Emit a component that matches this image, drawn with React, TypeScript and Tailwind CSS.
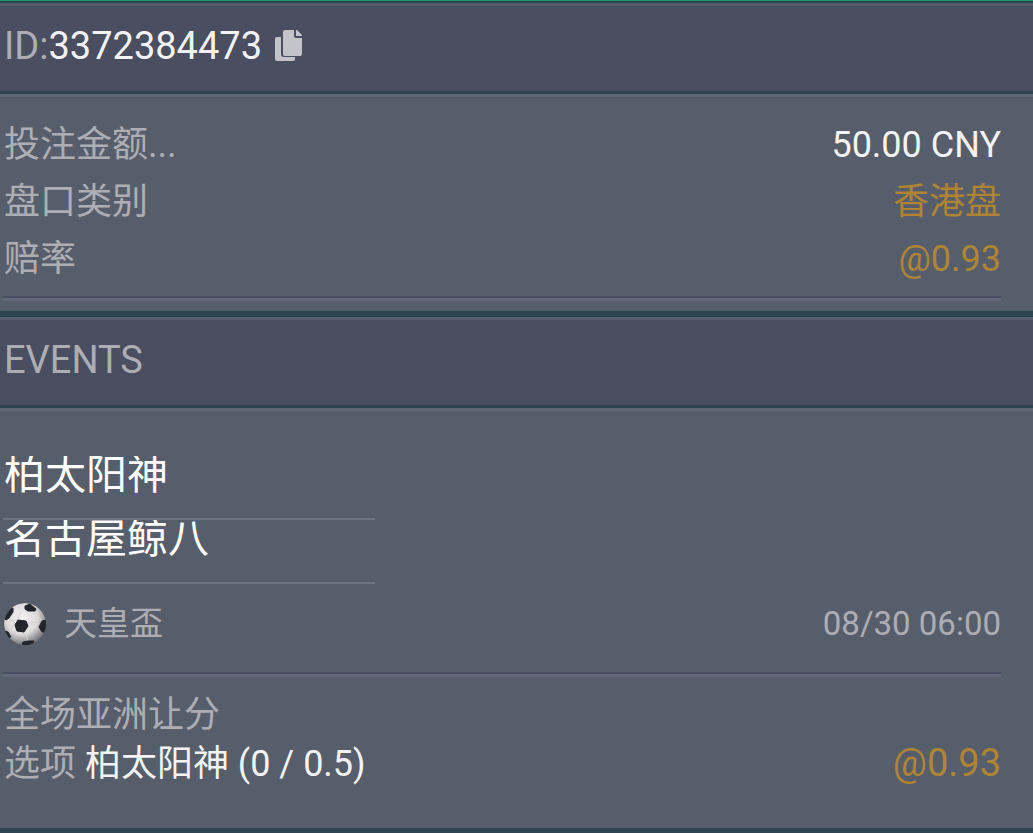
import type { ReactNode } from "react";

function SectionHeader({ children }: { children: ReactNode }) {
  return (
    <header className="flex h-[91px] items-center border-t-3 border-b-3 border-t-[#545b6b] border-b-[#2f4351] bg-[#494f61] px-1 pb-1.5 text-[38px] leading-[46px] text-[#acaeb3]">
      {children}
    </header>
  );
}

function Divider() {
  return <hr className="h-[5px] border-t-2 border-[#494f61] bg-[#626776]" />;
}

function DetailRow({ label, children }: { label: string; children: ReactNode }) {
  return (
    <div className="flex h-[57px] items-center justify-between pl-px">
      <dt>{label}</dt>
      <dd>{children}</dd>
    </div>
  );
}

function Team({ name }: { name: string }) {
  return (
    <div className="h-16 w-[372px] overflow-hidden border-b-2 border-[#6b7280] px-px">
      <h3 className="-mt-2 text-[41px] leading-[54px] text-white">{name}</h3>
    </div>
  );
}

function CopyIcon() {
  return (
    <svg viewBox="0 0 28 32" className="h-8 w-7" fill="#c3c4ca" aria-hidden="true">
      <path d="M2 7h4v17q0 3 3 3h11v2q0 2-2 2H2q-2 0-2-2V9q0-2 2-2z" />
      <path d="M10 0h9v6q0 2 2 2h6v16q0 2-2 2H10q-2 0-2-2V2q0-2 2-2z" />
      <path d="M21 0h1l5 5v1h-6z" />
    </svg>
  );
}

function SoccerBall() {
  return (
    <svg viewBox="0 0 42 42" className="h-[42px] w-[42px]" aria-hidden="true">
      <defs>
        <radialGradient id="ball-shade" cx="42%" cy="36%" r="64%">
          <stop offset="0" stopColor="#f1efef" />
          <stop offset="0.6" stopColor="#dbd9d9" />
          <stop offset="1" stopColor="#77777b" />
        </radialGradient>
        <clipPath id="ball-edge">
          <circle cx="21" cy="21" r="21" />
        </clipPath>
      </defs>
      <g clipPath="url(#ball-edge)">
        <circle cx="21" cy="21" r="21" fill="url(#ball-shade)" />
        <path
          d="M13 17 17 9M24 20 35 19M21 30 24 38M12 29 7 31M11 20 5 15M31 8 37 17"
          fill="none"
          stroke="#d3d1d2"
        />
        <g fill="#22252b" stroke="#22252b" strokeLinejoin="round">
          <path d="M14 17 22 18 24 23 20 29 13 28 11 22z" />
          <path d="M21 3 26 1 32 6 31 8 24 8 21 6z" />
          <path d="M38 18 42 17V29L38 29 35 24z" />
          <path d="M0 15 4 7 9 5 9 9 5 15 2 17z" />
          <path d="M1 28 4 29 7 34 4 35z" />
          <path d="M19 39 24 38 30 38 28 42H18z" />
        </g>
      </g>
    </svg>
  );
}

export default function App() {
  return (
    <main
      lang="zh-CN"
      className="border-t border-[#1f9667] bg-[#575e6b] font-['Roboto','Noto_Sans_CJK_SC',sans-serif] text-[36px] leading-[48px] text-[#acaeb3]"
    >
      <section className="border-t-2 border-[#2f4351]">
        <SectionHeader>
          <span>ID:</span>
          <span className="text-[#f3f3f4]">3372384473</span>
          <button type="button" aria-label="复制" className="ml-[13px]">
            <CopyIcon />
          </button>
        </SectionHeader>
        <div className="border-t-3 border-[#626776] pr-8 pb-[10px] pl-[3px]">
          <dl className="pt-[19px] pb-[9px]">
            <DetailRow label="投注金额...">
              <span className="text-[#f3f3f4]">50.00 CNY</span>
            </DetailRow>
            <DetailRow label="盘口类别">
              <span className="text-[#af8434]">香港盘</span>
            </DetailRow>
            <DetailRow label="赔率">
              <span className="text-[#af8434]">@0.93</span>
            </DetailRow>
          </dl>
          <Divider />
        </div>
      </section>
      <section className="border-t-6 border-b-6 border-[#2f4351]">
        <SectionHeader>
          <h2>EVENTS</h2>
        </SectionHeader>
        <div className="border-t-3 border-[#626776] pr-8 pb-10 pl-[3px]">
          <div className="pt-[45px]">
            <Team name="柏太阳神" />
            <Team name="名古屋鲸八" />
          </div>
          <div className="flex h-[88px] items-center justify-between pb-2 pl-px text-[33px]">
            <div className="flex items-center gap-[18px]">
              <SoccerBall />
              <span>天皇盃</span>
            </div>
            <time>08/30 06:00</time>
          </div>
          <Divider />
          <div className="pt-[14px] pl-px">
            <p>全场亚洲让分</p>
            <div className="flex items-baseline justify-between">
              <p>
                选项 <span className="text-[#f3f3f4]">柏太阳神 (0 / 0.5)</span>
              </p>
              <span className="text-[38px] text-[#af8434]">@0.93</span>
            </div>
          </div>
        </div>
      </section>
    </main>
  );
}
